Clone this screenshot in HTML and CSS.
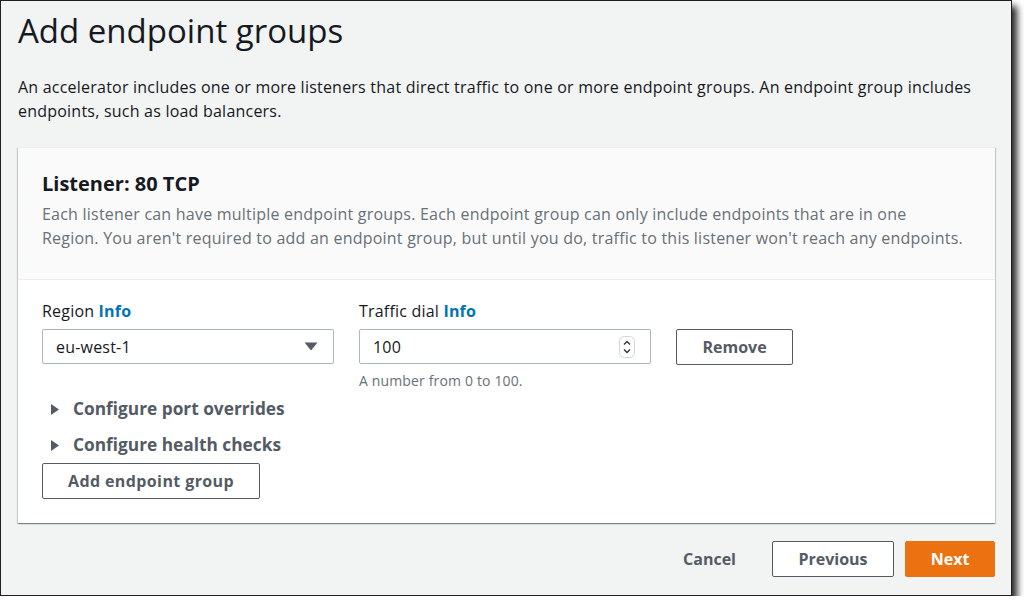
FILE: index.html
```html
<!DOCTYPE html>
<html lang="en">
<head>
    <meta charset="UTF-8">
    <meta name="viewport" content="width=device-width, initial-scale=1.0">
    <title>Add endpoint groups</title>
    <link rel="stylesheet" href="styles.css">
</head>
<body>

    <!-- Screenshot frame -->
    <div class="frame">
        <div class="page">
            <h1 class="page-title">Add endpoint groups</h1>
            <p class="page-desc">An accelerator includes one or more listeners that direct traffic to one or more endpoint groups. An endpoint group includes endpoints, such as load balancers.</p>

            <!-- Listener card -->
            <div class="card">
                <div class="card-header">
                    <h2>Listener: 80 TCP</h2>
                    <p>Each listener can have multiple endpoint groups. Each endpoint group can only include endpoints that are in one Region. You aren't required to add an endpoint group, but until you do, traffic to this listener won't reach any endpoints.</p>
                </div>
                <div class="card-body">
                    <div class="group-row">
                        <div class="field">
                            <div class="field-label">Region <span class="info">Info</span></div>
                            <div class="control">
                                <span>eu-west-1</span>
                                <svg class="caret" width="14" height="9" viewBox="0 0 14 9"><path d="M0.5 0.5h13L7 8.5z" fill="#545b64"/></svg>
                            </div>
                        </div>
                        <div class="field">
                            <div class="field-label">Traffic dial <span class="info">Info</span></div>
                            <div class="control">
                                <span>100</span>
                                <svg class="spinner" width="16" height="22" viewBox="0 0 16 22">
                                    <rect x="0.5" y="0.5" width="15" height="21" rx="5" fill="#fff" stroke="#d5d5d5"/>
                                    <path d="M5 8.5l3-3 3 3" fill="none" stroke="#333" stroke-width="1.4"/>
                                    <path d="M5 13.5l3 3 3-3" fill="none" stroke="#333" stroke-width="1.4"/>
                                </svg>
                            </div>
                            <div class="hint">A number from 0 to 100.</div>
                        </div>
                        <button class="btn btn-remove">Remove</button>
                    </div>

                    <div class="expander">
                        <svg width="8" height="11" viewBox="0 0 8 11"><path d="M0 0l8 5.5L0 11z" fill="#545b64"/></svg>
                        Configure port overrides
                    </div>
                    <div class="expander">
                        <svg width="8" height="11" viewBox="0 0 8 11"><path d="M0 0l8 5.5L0 11z" fill="#545b64"/></svg>
                        Configure health checks
                    </div>
                    <button class="btn btn-add">Add endpoint group</button>
                </div>
            </div>

            <!-- Wizard actions -->
            <div class="actions">
                <button class="btn-link">Cancel</button>
                <button class="btn btn-prev">Previous</button>
                <button class="btn btn-primary">Next</button>
            </div>
        </div>
    </div>

</body>
</html>
```

FILE: styles.css
```css
/* General body styling */
body {
    font-family: "Open Sans", "Noto Sans", Arial, sans-serif;
    margin: 0;
    padding: 0;
    background-color: #ffffff;
    color: #16191f;
}

/* Frame around the screenshot */
.frame {
    width: 1012px;
    height: 596px;
    box-sizing: border-box;
    border: 1px solid #1f1f1f;
    background-color: #f2f3f3;
    box-shadow: 5px 6px 7px rgba(0, 0, 0, 0.85);
    overflow: hidden;
}
.page {
    padding: 8px 16px 0 17px;
}

.page-title {
    font-size: 33px;
    font-weight: 400;
    line-height: 44px;
    margin: 0;
}
.page-desc {
    font-size: 16px;
    line-height: 24px;
    letter-spacing: 0.22px;
    margin: 22px 0 24px;
}

/* Card */
.card {
    background-color: #ffffff;
    border-top: 1px solid #eaeded;
    box-shadow: 0 1px 1px 0 rgba(0, 28, 36, 0.3), 1px 1px 1px 0 rgba(0, 28, 36, 0.15), -1px 1px 1px 0 rgba(0, 28, 36, 0.15);
}
.card-header {
    background-color: #fafafa;
    border-bottom: 1px solid #eaeded;
    padding: 24px 24px 29px;
}
.card-header h2 {
    font-size: 20px;
    font-weight: 700;
    line-height: 24px;
    margin: 0 0 6px;
}
.card-header p {
    font-size: 16px;
    line-height: 24px;
    letter-spacing: 0.22px;
    color: #687078;
    margin: 0;
    max-width: 925px;
}
.card-body {
    padding: 20px 24px 24px;
}

/* Endpoint group row */
.group-row {
    display: flex;
    align-items: flex-start;
    gap: 25px;
}
.field {
    width: 292px;
}
.field-label {
    font-size: 16px;
    line-height: 22px;
    letter-spacing: 0.2px;
    margin-bottom: 7px;
}
.info {
    color: #0073bb;
    font-weight: 700;
}
.control {
    height: 35px;
    box-sizing: border-box;
    border: 1px solid #aab7b8;
    border-radius: 2px;
    background-color: #ffffff;
    display: flex;
    align-items: center;
    justify-content: space-between;
    padding: 0 15px 0 13px;
    font-size: 16px;
    letter-spacing: 0.2px;
}
.hint {
    font-size: 14px;
    line-height: 20px;
    letter-spacing: 0.15px;
    color: #687078;
    margin-top: 7px;
}

/* Buttons */
.btn {
    font-family: inherit;
    font-size: 16px;
    font-weight: 700;
    color: #545b64;
    background-color: #ffffff;
    border: 1px solid #545b64;
    border-radius: 2px;
    height: 36px;
    padding: 0 20px;
    cursor: pointer;
}
.btn-remove {
    margin-top: 29px;
    width: 117px;
    height: 36px;
}
.btn-add {
    width: 218px;
    letter-spacing: 0.4px;
}

/* Expandable sections */
.expander {
    display: flex;
    align-items: center;
    gap: 14px;
    padding: 7px 0 7px 9px;
    font-size: 17.3px;
    font-weight: 700;
    line-height: 22px;
    color: #545b64;
}

/* Wizard footer */
.actions {
    display: flex;
    justify-content: flex-end;
    align-items: center;
    gap: 11px;
    margin-top: 18px;
}
.btn-link {
    font-family: inherit;
    font-size: 16px;
    font-weight: 700;
    color: #545b64;
    background: none;
    border: none;
    padding: 0 20px;
    margin-right: 5px;
    height: 36px;
}
.btn-prev {
    width: 122px;
}
.btn-primary {
    width: 90px;
    background-color: #ec7211;
    border-color: #ec7211;
    color: #ffffff;
}
```
